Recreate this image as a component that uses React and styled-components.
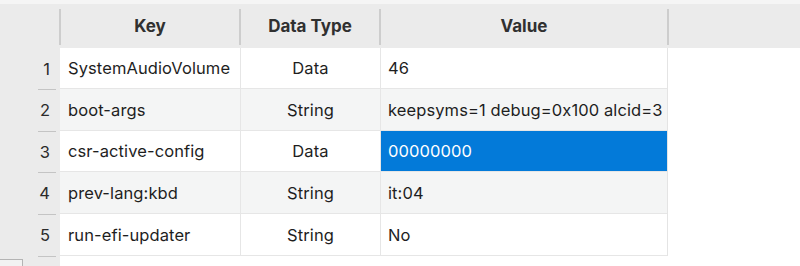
import React from 'react';
import styled, { createGlobalStyle } from 'styled-components';

const GlobalStyle = createGlobalStyle`
  html, body {
    margin: 0;
    padding: 0;
    background: #ffffff;
    font-family: 'Inter', 'Liberation Sans', sans-serif;
    -webkit-font-smoothing: antialiased;
  }
`;

const Window = styled.div`
  width: 800px;
  height: 266px;
  overflow: hidden;
  display: flex;
  flex-direction: column;
  background: #ffffff;
`;

const TopStrip = styled.div`
  height: 4px;
  flex-shrink: 0;
  background: #f5f5f5;
`;

const HeaderRow = styled.div`
  display: grid;
  grid-template-columns: 60px 180px 140px 288px 1fr;
  height: 44px;
  flex-shrink: 0;
  background: #ebebeb;
`;

const HeaderCell = styled.div`
  position: relative;
  display: flex;
  align-items: center;
  justify-content: center;
  font-size: 17px;
  font-weight: 700;
  color: #303030;

  ${({ $divider }) => $divider && `
    &::before {
      content: '';
      position: absolute;
      left: -1px;
      top: 5px;
      bottom: 3px;
      width: 2px;
      background: #cdcdcd;
    }
  `}
`;

const Body = styled.div`
  flex: 1;
  min-height: 0;
  display: grid;
  grid-template-columns: 60px 608px 1fr;
`;

const NumberColumn = styled.div`
  background: #ebebeb;
  display: flex;
  flex-direction: column;
`;

const NumberCell = styled.div`
  position: relative;
  height: ${({ $h }) => $h}px;
  flex-shrink: 0;
  display: flex;
  align-items: center;
  justify-content: flex-end;
  padding-right: 10px;
  font-size: 16.5px;
  color: #2a2a2a;

  &::after {
    content: '';
    position: absolute;
    right: 4px;
    bottom: -1px;
    width: 18px;
    height: 1px;
    background: #c4c4c4;
  }
`;

const CornerButton = styled.div`
  margin-top: auto;
  width: 22px;
  height: 6px;
  border: 1px solid #b4b4b4;
  border-bottom: none;
  border-left: none;
  background: #f2f2f2;
`;

const Table = styled.div`
  display: flex;
  flex-direction: column;
  align-self: start;
  border-right: 1px solid #e4e4e4;
`;

const Row = styled.div`
  display: grid;
  grid-template-columns: 180px 140px 1fr;
  height: ${({ $h }) => $h}px;
  background: ${({ $alt }) => ($alt ? '#f4f5f5' : '#ffffff')};
  border-bottom: 1px solid #e6e6e6;
  box-sizing: border-box;
`;

const Cell = styled.div`
  display: flex;
  align-items: center;
  justify-content: ${({ $center }) => ($center ? 'center' : 'flex-start')};
  padding: 0 7px;
  font-size: 16.5px;
  letter-spacing: 0.1px;
  color: ${({ $selected }) => ($selected ? '#ffffff' : '#1e1e1e')};
  background: ${({ $selected }) => ($selected ? '#037ad9' : 'transparent')};
  border-left: 1px solid ${({ $first }) => ($first ? 'transparent' : '#e6e6e6')};
  white-space: nowrap;
  overflow: hidden;
`;

const Filler = styled.div`
  background: #ffffff;
`;

const rows = [
  { key: 'SystemAudioVolume', type: 'Data', value: '46', h: 41 },
  { key: 'boot-args', type: 'String', value: 'keepsyms=1 debug=0x100 alcid=3', h: 42 },
  { key: 'csr-active-config', type: 'Data', value: '00000000', h: 41, selected: true },
  { key: 'prev-lang:kbd', type: 'String', value: 'it:04', h: 42 },
  { key: 'run-efi-updater', type: 'String', value: 'No', h: 42 },
];

export default function App() {
  return (
    <>
      <GlobalStyle />
      <Window>
        <TopStrip />
        <HeaderRow>
          <HeaderCell />
          <HeaderCell $divider>Key</HeaderCell>
          <HeaderCell $divider>Data Type</HeaderCell>
          <HeaderCell $divider>Value</HeaderCell>
          <HeaderCell $divider />
        </HeaderRow>
        <Body>
          <NumberColumn>
            {rows.map((r, i) => (
              <NumberCell key={r.key} $h={r.h}>{i + 1}</NumberCell>
            ))}
            <CornerButton />
          </NumberColumn>
          <Table>
            {rows.map((r, i) => (
              <Row key={r.key} $h={r.h} $alt={i % 2 === 1}>
                <Cell $first>{r.key}</Cell>
                <Cell $center>{r.type}</Cell>
                <Cell $selected={r.selected}>{r.value}</Cell>
              </Row>
            ))}
          </Table>
          <Filler />
        </Body>
      </Window>
    </>
  );
}
